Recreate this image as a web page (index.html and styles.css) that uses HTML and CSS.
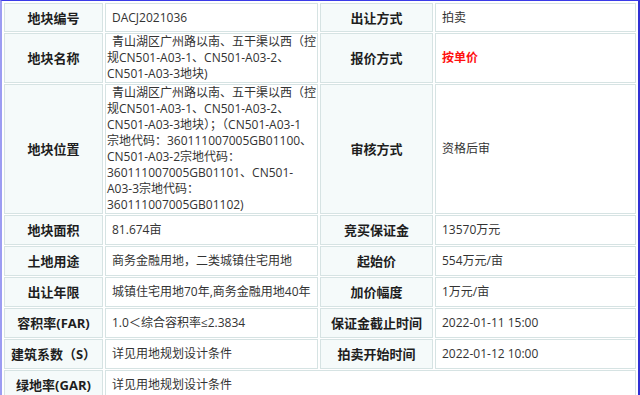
FILE: index.html
```html
<!DOCTYPE html>
<html lang="zh-CN">
<head>
  <meta charset="UTF-8" />
  <meta name="viewport" content="width=device-width, initial-scale=1.0"/>
  <title>地块信息</title>
  <link rel="stylesheet" href="styles.css">
</head>
<body>
<div class="panel">
  <table class="info">
    <colgroup>
      <col class="c-label1">
      <col class="c-value1">
      <col class="c-label2">
      <col class="c-value2">
    </colgroup>
    <tr class="first">
      <th>地块编号</th>
      <td>DACJ2021036</td>
      <th>出让方式</th>
      <td>拍卖</td>
    </tr>
    <tr>
      <th>地块名称</th>
      <td>青山湖区广州路以南、五干渠以西（控<br>规CN501-A03-1、CN501-A03-2、<br>CN501-A03-3地块)</td>
      <th>报价方式</th>
      <td><span class="hot">按单价</span></td>
    </tr>
    <tr>
      <th>地块位置</th>
      <td>青山湖区广州路以南、五干渠以西（控<br>规CN501-A03-1、CN501-A03-2、<br>CN501-A03-3地块）；（CN501-A03-1<br>宗地代码：360111007005GB01100、<br>CN501-A03-2宗地代码：<br>360111007005GB01101、CN501-<br>A03-3宗地代码：<br>360111007005GB01102)</td>
      <th>审核方式</th>
      <td>资格后审</td>
    </tr>
    <tr>
      <th>地块面积</th>
      <td>81.674亩</td>
      <th>竞买保证金</th>
      <td>13570万元</td>
    </tr>
    <tr>
      <th>土地用途</th>
      <td>商务金融用地，二类城镇住宅用地</td>
      <th>起始价</th>
      <td>554万元/亩</td>
    </tr>
    <tr>
      <th>出让年限</th>
      <td>城镇住宅用地70年,商务金融用地40年</td>
      <th>加价幅度</th>
      <td>1万元/亩</td>
    </tr>
    <tr>
      <th>容积率(FAR)</th>
      <td>1.0＜综合容积率≤2.3834</td>
      <th>保证金截止时间</th>
      <td>2022-01-11 15:00</td>
    </tr>
    <tr>
      <th>建筑系数（S）</th>
      <td>详见用地规划设计条件</td>
      <th>拍卖开始时间</th>
      <td>2022-01-12 10:00</td>
    </tr>
    <tr>
      <th>绿地率(GAR)</th>
      <td colspan="3">详见用地规划设计条件</td>
    </tr>
  </table>
</div>
</body>
</html>
```

FILE: styles.css
```css
* {
  margin: 0;
  padding: 0;
  box-sizing: border-box;
}

body {
  font-family: "Open Sans", "Noto Sans CJK SC", sans-serif;
  background: #fff;
  color: #333;
  width: 640px;
  height: 395px;
  overflow: hidden;
}

.panel {
  border-top: 1px solid #3b3be8;
  border-left: 2px solid #9c9cf2;
  border-right: 2px solid #3030d4;
  padding-top: 1px;
  height: 395px;
}

.info {
  table-layout: fixed;
  width: 636px;
  border-collapse: separate;
  border-spacing: 2px 1px;
}

.c-label1 { width: 99px; }
.c-value1 { width: 213px; }
.c-label2 { width: 113px; }
.c-value2 { width: 201px; }

.info th,
.info td {
  border: 1px solid #d6e3e3;
  height: 30px;
  line-height: 16px;
  vertical-align: middle;
}

.info tr.first th,
.info tr.first td {
  height: 29px;
}

.info th {
  background: #f5fafa;
  color: #1e1e1e;
  font-size: 13px;
  font-weight: bold;
  text-align: center;
  white-space: nowrap;
}

.info td {
  background: #fff;
  font-size: 12px;
  text-align: left;
  padding-left: 1px;
  text-indent: 5px;
}

.hot {
  color: #ff1010;
  font-weight: bold;
}
```
